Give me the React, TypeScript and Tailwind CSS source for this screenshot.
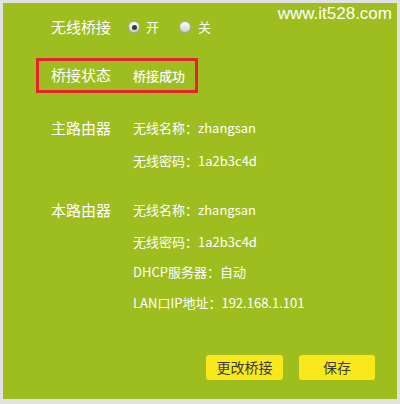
import React from 'react';

const font = { fontFamily: '"Noto Sans CJK SC", "Liberation Sans", sans-serif' };

const Radio: React.FC<{ checked?: boolean }> = ({ checked }) => (
  <span className="flex h-[12px] w-[12px] items-center justify-center rounded-full border border-[#a8a8a8] bg-gradient-to-b from-[#ffffff] to-[#cfcfcf]">
    {checked && <span className="h-[5px] w-[5px] rounded-full bg-[#3a3a3a]" />}
  </span>
);

const Row: React.FC<{ label?: string; value: string; top: string }> = ({ label, value, top }) => (
  <div className={`flex h-5 items-center pl-[15px] ${top}`}>
    <span className="w-[82px] text-[15px] text-white">{label}</span>
    <span className="text-[13px] text-white">{value}</span>
  </div>
);

export default function App() {
  return (
    <div className="h-[404px] w-[400px] bg-[#e2e2e2] pt-[3px] pl-[3px] pr-[3px] pb-[5px]" style={font}>
      <div className="relative flex h-full flex-col bg-[#9ebd1e] pt-[14px] pl-[33px]">
        <span
          className="absolute right-[5px] top-[1px] text-[17px] leading-5 text-white"
          style={{ fontFamily: '"Liberation Sans", sans-serif' }}
        >
          www.it528.com
        </span>

        {/* 无线桥接 */}
        <div className="flex h-5 items-center pl-[15px]">
          <span className="w-[77px] text-[15px] text-white">无线桥接</span>
          <Radio checked />
          <span className="ml-[6px] text-[13px] text-white">开</span>
          <span className="ml-[20px]">
            <Radio />
          </span>
          <span className="ml-[7px] text-[13px] text-white">关</span>
        </div>

        {/* 桥接状态 */}
        <div className="mt-[21px] flex h-[35px] w-[162px] items-center border-[3px] border-[#e8202a] pl-[12px]">
          <span className="w-[82px] text-[15px] text-white">桥接状态</span>
          <span className="text-[13px] font-medium text-white">桥接成功</span>
        </div>

        <Row label="主路由器" value="无线名称：zhangsan" top="mt-[25px]" />
        <Row value="无线密码：1a2b3c4d" top="mt-[13px]" />
        <Row label="本路由器" value="无线名称：zhangsan" top="mt-[29px]" />
        <Row value="无线密码：1a2b3c4d" top="mt-[12px]" />
        <Row value="DHCP服务器：自动" top="mt-[10px]" />
        <Row value="LAN口IP地址：192.168.1.101" top="mt-[11px]" />

        <div className="mt-[42px] flex justify-end gap-4 pr-[22px]">
          <button className="h-[25px] w-[77px] rounded-[3px] bg-[#f8e81c] text-[14px] text-[#3a3a3a]">更改桥接</button>
          <button className="h-[25px] w-[76px] rounded-[3px] bg-[#f8e81c] text-[14px] text-[#3a3a3a]">保存</button>
        </div>
      </div>
    </div>
  );
}
